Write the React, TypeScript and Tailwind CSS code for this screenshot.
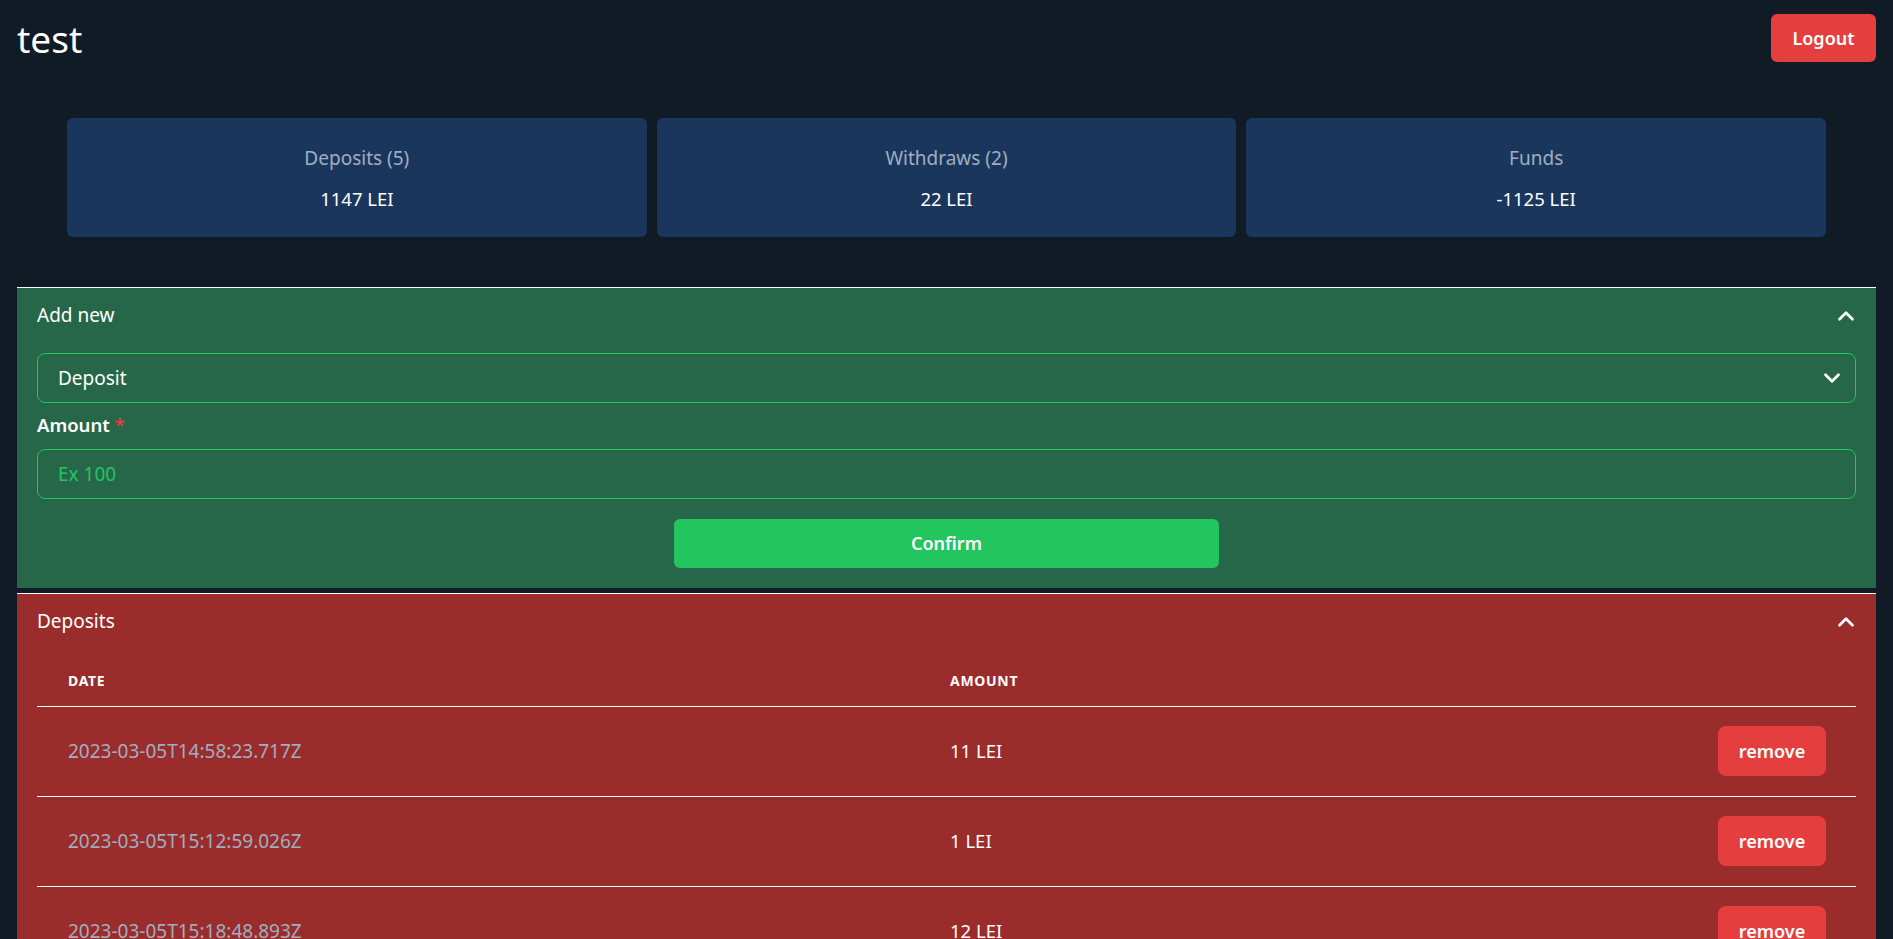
import React from "react";
import { ChevronUp, ChevronDown } from "lucide-react";

interface Entry {
  date: string,
  amount: number
}

const deposits: Entry[] = [
  { date: "2023-03-05T14:58:23.717Z", amount: 11 },
  { date: "2023-03-05T15:12:59.026Z", amount: 1 },
  { date: "2023-03-05T15:18:48.893Z", amount: 12 },
  { date: "2023-03-05T15:20:11.402Z", amount: 1100 },
  { date: "2023-03-05T15:24:37.158Z", amount: 23 },
];

const Stat = ({ label, value }: { label: string, value: string }) => (
  <div className="flex-1 h-[119px] rounded-md bg-[#1a365d] flex flex-col items-center justify-center gap-[13px] pt-[2px]">
    <div className="text-[19px] leading-[28px] text-[#a0aec0]">{label}</div>
    <div className="text-[18.5px] leading-[28px] text-white">{value}</div>
  </div>
);

const SectionHeader = ({ title }: { title: string }) => (
  <div className="h-[55px] flex items-center justify-between pl-[20px] pr-[17px] text-[19px] text-white">
    <span>{title}</span>
    <ChevronUp size={26} strokeWidth={2.5} />
  </div>
);

const App = () => {
  return (
    <div className="min-h-screen bg-[#101b25] text-white font-['Noto_Sans',sans-serif] pb-10">
      <header className="flex items-start justify-between px-[17px] pt-[13px]">
        <h1 className="text-[37px] leading-[52px] text-white">test</h1>
        <button className="mt-[1px] h-[48px] w-[105px] rounded-md bg-[#e53e3e] text-[18px] font-semibold text-white">Logout</button>
      </header>

      <div className="flex gap-[10px] mx-[67px] mt-[53px]">
        <Stat label="Deposits (5)" value="1147 LEI" />
        <Stat label="Withdraws (2)" value="22 LEI" />
        <Stat label="Funds" value="-1125 LEI" />
      </div>

      <div className="mx-[17px] mt-[50px] flex flex-col gap-[5px]">
        {/* add new */}
        <section className="border-t border-white bg-[#276749]">
          <SectionHeader title="Add new" />
          <div className="px-[20px] pt-[10px] pb-[20px]">
            <div className="relative">
              <select className="appearance-none w-full h-[50px] rounded-lg border border-[#22c55e] bg-transparent pl-[20px] text-[19px] text-white outline-none">
                <option>Deposit</option>
                <option>Withdraw</option>
              </select>
              <ChevronDown size={26} strokeWidth={2.5} className="absolute right-[11px] top-[12px] pointer-events-none" />
            </div>
            <label className="block mt-[7px] mb-[9px] text-[18.5px] leading-[30px] font-semibold">
              Amount <span className="text-[#e53e3e]">*</span>
            </label>
            <input
              placeholder="Ex 100"
              className="w-full h-[50px] rounded-lg border border-[#22c55e] bg-transparent px-[20px] text-[19px] text-white placeholder:text-[#22c55e] outline-none"
            />
            <div className="flex justify-center mt-[20px]">
              <button className="w-[30%] h-[49px] rounded-md bg-[#22c55e] text-[18px] font-semibold text-white">Confirm</button>
            </div>
          </div>
        </section>

        {/* deposits */}
        <section className="border-t border-white bg-[#9b2c2c]">
          <SectionHeader title="Deposits" />
          <div className="px-[20px] pt-[10px] pb-[21px]">
            <table className="w-full border-collapse">
              <thead>
                <tr className="border-b border-white">
                  <th className="w-[882px] h-[47px] px-[31px] pb-[4px] text-left text-[14px] font-bold uppercase tracking-wider">Date</th>
                  <th className="h-[47px] px-[31px] pb-[4px] text-left text-[14px] font-bold uppercase tracking-wider">Amount</th>
                  <th className="w-[168px] h-[47px]"></th>
                </tr>
              </thead>
              <tbody>
                {deposits.map((d) => (
                  <tr key={d.date} className="border-b border-white">
                    <td className="h-[90px] px-[31px] text-[19px] text-[#a0aec0]">{d.date}</td>
                    <td className="h-[90px] px-[31px] text-[18.5px] text-white">{d.amount} LEI</td>
                    <td className="h-[90px] pr-[30px] text-right">
                      <button className="h-[50px] w-[108px] rounded-lg bg-[#e53e3e] text-[18px] font-semibold text-white">remove</button>
                    </td>
                  </tr>
                ))}
              </tbody>
            </table>
          </div>
        </section>
      </div>
    </div>
  );
};

export default App;
